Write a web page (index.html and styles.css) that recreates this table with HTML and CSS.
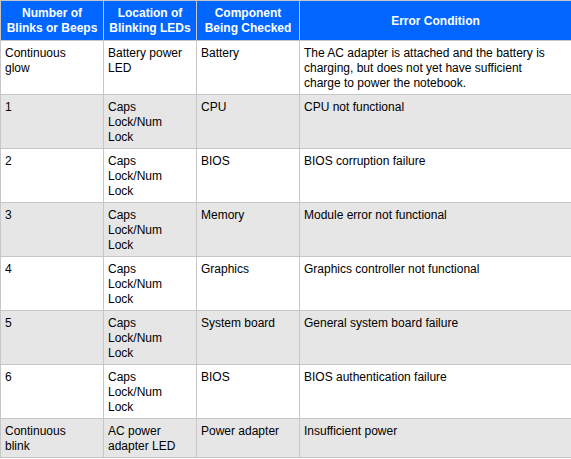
FILE: index.html
```html
<!DOCTYPE html>
<html lang="en">
<head>
<meta charset="utf-8">
<title>Blink codes</title>
<link rel="stylesheet" href="styles.css">
</head>
<body>
<table class="codes">
  <colgroup>
    <col class="c1">
    <col class="c2">
    <col class="c3">
    <col class="c4">
  </colgroup>
  <thead>
    <tr>
      <th>Number of Blinks or Beeps</th>
      <th>Location of Blinking LEDs</th>
      <th>Component Being Checked</th>
      <th>Error Condition</th>
    </tr>
  </thead>
  <tbody>
    <tr>
      <td>Continuous glow</td>
      <td>Battery power LED</td>
      <td>Battery</td>
      <td>The AC adapter is attached and the battery is charging, but does not yet have sufficient charge to power the notebook.</td>
    </tr>
    <tr class="alt">
      <td>1</td>
      <td>Caps Lock/Num Lock</td>
      <td>CPU</td>
      <td>CPU not functional</td>
    </tr>
    <tr>
      <td>2</td>
      <td>Caps Lock/Num Lock</td>
      <td>BIOS</td>
      <td>BIOS corruption failure</td>
    </tr>
    <tr class="alt">
      <td>3</td>
      <td>Caps Lock/Num Lock</td>
      <td>Memory</td>
      <td>Module error not functional</td>
    </tr>
    <tr>
      <td>4</td>
      <td>Caps Lock/Num Lock</td>
      <td>Graphics</td>
      <td>Graphics controller not functional</td>
    </tr>
    <tr class="alt">
      <td>5</td>
      <td>Caps Lock/Num Lock</td>
      <td>System board</td>
      <td>General system board failure</td>
    </tr>
    <tr>
      <td>6</td>
      <td>Caps Lock/Num Lock</td>
      <td>BIOS</td>
      <td>BIOS authentication failure</td>
    </tr>
    <tr class="alt">
      <td>Continuous blink</td>
      <td>AC power adapter LED</td>
      <td>Power adapter</td>
      <td>Insufficient power</td>
    </tr>
  </tbody>
</table>
</body>
</html>
```
FILE: styles.css
```css
html, body {
  margin: 0;
  padding: 0;
  background: #ffffff;
}

.codes {
  width: 571px;
  table-layout: fixed;
  border-collapse: collapse;
  font-family: "Liberation Sans", Arial, sans-serif;
  font-size: 12px;
  line-height: 15px;
  color: #000000;
}

.c1 { width: 103px; }
.c2 { width: 93px; }
.c3 { width: 103px; }
.c4 { width: 272px; }

.codes th,
.codes td {
  border: 1px solid #c6c6c6;
}

.codes th {
  background: #0066ff;
  color: #ffffff;
  font-weight: bold;
  text-align: center;
  vertical-align: middle;
  padding: 5px 4px 4px;
}

.codes td {
  text-align: left;
  vertical-align: top;
  padding: 5px 10px 3px 4px;
  height: 45px;
}

.codes tbody tr:last-child td {
  height: 30px;
}

.codes tr.alt td {
  background: #e6e6e6;
}
```
